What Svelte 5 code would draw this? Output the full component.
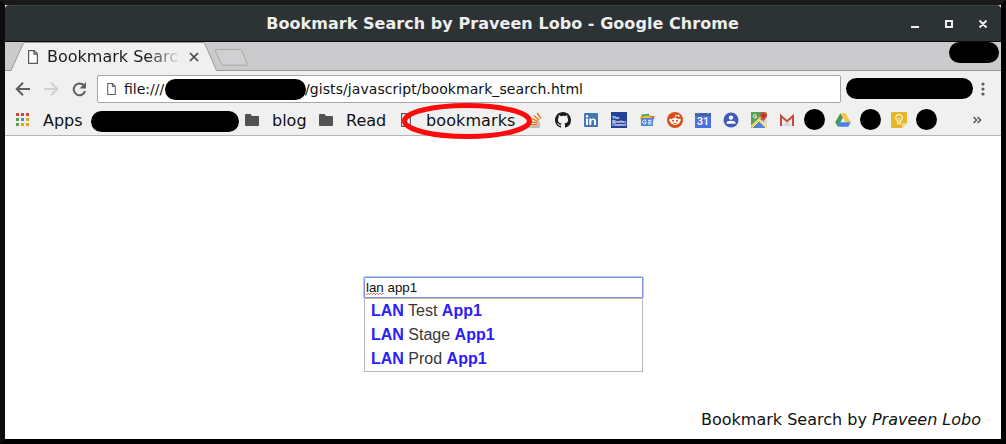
<script>
  const appColors = ['#d14836', '#d14836', '#d14836', '#5b9a56', '#4285f4', '#e0a51b', '#5b9a56', '#e0a51b', '#e0a51b'];
  const results = ['Test', 'Stage', 'Prod'];
  const favicons = ['stack', 'github', 'linkedin', 'weather', 'news', 'reddit', 'calendar', 'contacts', 'maps', 'gmail', 'hidden', 'drive', 'hidden', 'keep', 'hidden'];
</script>

{#snippet page(w, h)}
  <svg width={w} height={h} viewBox="0 0 10 14" fill="#fff" stroke="#5a5a5a" stroke-width="1.2"><path d="M.6.6h5.6l3.2 3.4v9.4H.6zM6 .8v3.4h3.2" /></svg>
{/snippet}

{#snippet folder()}
  <svg width="14" height="12" viewBox="0 0 14 12"><path d="M1 0h4.500L7 2h6q1 0 1 1v8q0 1-1 1H1q-1 0-1-1V1q0-1 1-1z" fill="#505352" /></svg>
{/snippet}

<div class="frame">
  <header class="title">
    <h1>Bookmark Search by Praveen Lobo - Google Chrome</h1>
    <svg class="controls" width="78" height="10" viewBox="0 0 78 10" fill="none" stroke="#eee" stroke-width="2">
      <path d="M0 8h8M35 2h6v6h-6zM68.500 1.500l7 7M75.500 1.500l-7 7" />
    </svg>
  </header>

  <div class="tabs">
    <svg class="tabshape" width="996" height="29" viewBox="0 0 996 29">
      <path d="M6 28.500L18 2q.7-1.5 2-1.5h178q1.3 0 2 1.5l11.5 26.500V29H6z" fill="#f0f0f1" />
      <path d="M0 28.500h6L18 2q.7-1.500 2-1.500h178q1.300 0 2 1.500l11.500 26.500H996" fill="none" stroke="#999" />
      <path d="M211 7.500h24q1.300 0 2 1.200l5 12.500q.5 2-1.200 2h-22q-2 0-2.500-1.500l-5.800-12.500q-.5-1.500.5-1.700z" fill="#d0d0d2" stroke="#a7a7a8" />
    </svg>
    <div class="tab">
      {@render page(10, 14)}
      <span class="tabname">Bookmark Searc</span>
      <svg width="10" height="10" viewBox="0 0 10 10" stroke="#464646" stroke-width="1.7"><path d="M1 1l8 8M9 1L1 9" /></svg>
    </div>
    <div class="redact user"></div>
  </div>

  <div class="toolbar">
    <svg class="nav" width="74" height="16" viewBox="0 0 74 16" fill="none" stroke="#5f5f63" stroke-width="2">
      <path d="M15 8H2M8 1.700L1.700 8 8 14.300" />
      <path d="M29 8h13M36 1.700L42.300 8 36 14.300" stroke="#d0d0d1" />
      <path d="M69 4.700A5.800 5.800 0 1 0 70.100 10" />
      <path d="M71 1v6.500h-6.500z" fill="#5f5f63" stroke="none" />
    </svg>
    <div class="url">
      {@render page(9, 12)}
      <span class="scheme">file:///</span>
      <div class="redact path"></div>
      <span class="rest">/gists/javascript/bookmark_search.html</span>
    </div>
    <div class="redact ext"></div>
    <svg class="dots" width="4" height="14" viewBox="0 0 4 14" fill="#5a5a5d"><circle cx="2" cy="2" r="1.600" /><circle cx="2" cy="7" r="1.600" /><circle cx="2" cy="12" r="1.600" /></svg>
  </div>

  <nav class="bookmarks">
    <div class="apps">{#each appColors as color}<i style:background={color}></i>{/each}</div>
    <span class="label w-apps">Apps</span>
    <div class="redact first"></div>
    {@render folder()}
    <span class="label w-blog">blog</span>
    {@render folder()}
    <span class="label w-read">Read</span>
    {@render page(10, 14)}
    <span class="label w-marks">bookmarks</span>
    <div class="favicons">
      {#each favicons as icon}
        <div class="cell">
          {#if icon === 'hidden'}
            <div class="redact dot"></div>
          {:else}
            <svg width="16" height="16" viewBox="0 0 16 16">
              {#if icon === 'stack'}
                <path d="M2 10v5h10v-5" fill="none" stroke="#aaa" stroke-width="1.400" />
                <path d="M3.500 12.700h7M3.800 9.800l6.800 1.300M5 6.600l6.200 3M7 3.500l5.200 4.700M10.200 1l3.700 5.700" fill="none" stroke="#e07b22" stroke-width="1.400" />
              {:else if icon === 'github'}
                <path fill="#1b1b1b" d="M8 0C3.580 0 0 3.580 0 8c0 3.540 2.290 6.530 5.470 7.590.4.070.55-.17.55-.38 0-.19-.01-.82-.01-1.490-2.010.37-2.530-.49-2.690-.94-.09-.23-.48-.94-.82-1.130-.28-.15-.68-.52-.01-.53.63-.01 1.080.58 1.230.82.72 1.210 1.870.87 2.330.66.07-.52.28-.87.51-1.070-1.780-.2-3.640-.89-3.640-3.950 0-.87.31-1.590.82-2.150-.08-.2-.36-1.020.08-2.120 0 0 .67-.21 2.200.82A7.700 7.700 0 0 1 8 3.870c.68 0 1.360.09 2 .26 1.530-1.040 2.200-.82 2.200-.82.44 1.100.16 1.920.08 2.120.51.56.82 1.270.82 2.150 0 3.070-1.870 3.750-3.650 3.950.29.25.54.73.54 1.480 0 1.070-.01 1.930-.01 2.200 0 .21.15.46.55.38A8.010 8.010 0 0 0 16 8c0-4.420-3.580-8-8-8z" />
              {:else if icon === 'linkedin'}
                <path fill="#4376b5" d="M2 1h12q1 0 1 1v12q0 1-1 1H2q-1 0-1-1V2q0-1 1-1z" />
                <path fill="#fff" d="M3 6.500h2V13H3zM6.300 6.500h2v1c1.100-1.800 4.700-1.500 4.700 1.700V13h-2V9.500c0-2-2.700-2-2.700.1V13h-2z" /><circle cx="4" cy="4.300" r="1.200" fill="#fff" />
              {:else if icon === 'weather'}
                <path fill="#24409b" d="M0 0h16v16H0z" />
                <g fill="#fff" font-family="Liberation Sans" font-weight="700" font-size="4"><text x="1" y="7">The</text><text x="1" y="10.500" textLength="14" lengthAdjust="spacingAndGlyphs">Weather</text><text x="1" y="14" textLength="14" lengthAdjust="spacingAndGlyphs">Channel</text></g>
              {:else if icon === 'news'}
                <path fill="#45a366" d="M2.500 2.500l7.500-.8.800 5H2z" /><path fill="#e4584b" d="M10.500 3.700l5 .6-1.500 5h-4z" /><path fill="#f2bd2e" d="M.5 5l8-1.500 4.500 2v3H2z" />
                <path fill="#4c82e0" d="M2 6h12v7q0 1-1 1H3q-1 0-1-1z" />
                <path d="M7.200 8.700a2 2 0 1 0 0 2.600v-1H5.800M9 8.300h3.500M9 10.100h3.500M9 11.900h3.500" fill="none" stroke="#fff" stroke-width="1" />
              {:else if icon === 'reddit'}
                <circle cx="8" cy="8" r="8" fill="#d84e16" /><ellipse cx="8" cy="9.400" rx="4.900" ry="3.500" fill="#fff" /><circle cx="3.400" cy="8" r="1.300" fill="#fff" /><circle cx="12.600" cy="8" r="1.300" fill="#fff" />
                <path d="M8 6l.8-3 2.300.6" fill="none" stroke="#fff" stroke-width=".8" /><circle cx="11.600" cy="3.800" r="1.100" fill="#fff" /><circle cx="6" cy="8.700" r="1" fill="#d84e16" /><circle cx="10" cy="8.700" r="1" fill="#d84e16" /><path d="M5.900 11q2.100 1.200 4.200 0" stroke="#d84e16" fill="none" stroke-width=".8" />
              {:else if icon === 'calendar'}
                <path fill="#4e70df" d="M0 1h16v15H0z" /><path fill="#3f5fa9" d="M0 1h16v3H0z" /><path fill="#ddd" d="M2 0h2v1.500H2zM12 0h2v1.500h-2z" /><text x="8" y="13" text-anchor="middle" font-family="Roboto" font-size="10.500" font-weight="600" fill="#fff">31</text>
              {:else if icon === 'contacts'}
                <circle cx="8" cy="8" r="7.500" fill="#4159bc" /><circle cx="8" cy="5.600" r="2.200" fill="#fff" /><path fill="#fff" d="M3.500 11.800V11q0-2.200 4.500-2.200t4.500 2.200v.8z" />
              {:else if icon === 'maps'}
                <path fill="#55a15b" d="M0 0h16v16H0z" /><path fill="#d8d9d9" d="M16 4v12L10 9z" /><path fill="#547fe8" d="M2.500 16L9 9.500l6.500 6.500z" /><path d="M0 15L15.500 0M8 8l8 8" stroke="#f8d358" stroke-width="2" /><path d="M1 16l8-8 7 8" fill="none" stroke="#fff" stroke-width=".7" />
                <path fill="#cd493d" d="M12.500 0a3.500 3.500 0 0 1 3.500 3.500c0 2.500-3 3.500-3.500 7-.5-3.500-3.500-4.500-3.500-7A3.500 3.500 0 0 1 12.500 0z" /><circle cx="12.500" cy="3.600" r="1.200" fill="#7b2928" /><path d="M5.300 3.200a1.700 1.700 0 1 0 .4 1.300H4.200" fill="none" stroke="#fff" stroke-width=".9" />
              {:else if icon === 'gmail'}
                <path fill="#ececec" d="M1 3h14v11H1z" /><path fill="#d9d9d9" d="M3 14l5-5 5 5z" /><path d="M2 14V4l6 5.200L14 4v10" fill="none" stroke="#c84a3c" stroke-width="2" />
              {:else if icon === 'drive'}
                <path fill="#45975c" d="M5.400 1.200L8 5.700 2.800 14.800.2 10.200z" /><path fill="#f2c940" d="M5.400 1.200h5.200l5.200 9h-5.200z" /><path fill="#4d7fe5" d="M5.300 10.200h10.500l-2.600 4.600H2.800z" />
              {:else}
                <path fill="#e4b72c" d="M1 0h14q1 0 1 1v10l-5 5H1q-1 0-1-1V1q0-1 1-1z" /><path fill="#f5d980" d="M11 16v-5h5z" /><path d="M6.300 10V8.500a3.200 3.200 0 1 1 3.400 0V10zM6.200 11.700h3.600" fill="none" stroke="#fff4cf" stroke-width="1.200" /><path d="M7 6l1 1 1-1M8 7v3" stroke="#fff4cf" fill="none" stroke-width=".7" />
              {/if}
            </svg>
          {/if}
        </div>
      {/each}
    </div>
    <svg class="more" width="9" height="8" viewBox="0 0 9 8" fill="none" stroke="#555" stroke-width="1.500"><path d="M.6 1l3 3-3 3M4.600 1l3 3-3 3" /></svg>
    <svg class="ring" width="134" height="38" viewBox="0 0 134 38"><ellipse cx="67" cy="19" rx="62.500" ry="15.500" fill="none" stroke="#fb0b0b" stroke-width="5" /></svg>
  </nav>

  <main>
    <div class="search">
      <div class="input"><span class="typo">lan</span> app1</div>
      <ul>
        {#each results as name}<li><b>LAN</b> {name} <b>App1</b></li>{/each}
      </ul>
    </div>
    <footer>Bookmark Search by <em>Praveen Lobo</em></footer>
  </main>
</div>

<style>
  :global(body) { margin: 0; }
  * { box-sizing: border-box; }
  svg { display: block; flex: none; }
  .frame { width: 1006px; height: 444px; border: 5px solid; border-color: #1a1a1a #000 #000 #0d0d0d; background: #fff; display: flex; flex-direction: column; overflow: hidden; font-family: "DejaVu Sans", sans-serif; font-size: 16px; color: #111; }
  .redact { background: #000; flex: none; border-radius: 11px; }
  .title { height: 37px; flex: none; background: #2d3234; border-top: 1px solid #3d4244; border-bottom: 1px solid #090a0a; border-radius: 4px 4px 0 0; display: grid; grid-template-columns: 906px 78px; align-items: center; }
  h1 { margin: 0; padding-left: 89px; text-align: center; font-size: 16px; letter-spacing: .05px; line-height: 35px; color: #eee; white-space: nowrap; }
  .controls { margin-top: 1px; }
  .tabs { height: 29px; flex: none; background: #cbcbcd; display: grid; grid-template-columns: 944px 50px; }
  .tabs > * { grid-row: 1; }
  .tabshape { grid-column: 1; }
  .tab { grid-column: 1; display: flex; align-items: center; padding-left: 23px; height: 29px; z-index: 1; }
  .tabname { width: 133px; margin: 0 9px 0 9px; white-space: nowrap; overflow: hidden; color: transparent; background: linear-gradient(90deg, #1b1b1b 100px, #f0f0f1 136px); background-clip: text; }
  .user { grid-column: 2; height: 21px; z-index: 1; }
  .toolbar { height: 33px; flex: none; display: flex; align-items: center; background: #f0f0f1; padding: 3px 14px 0 10px; }
  .nav { margin-right: 8px; }
  .url { width: 744px; height: 28px; flex: none; border: 1px solid #a6a6a6; border-radius: 2px; background: #fff; display: flex; align-items: center; padding-left: 9px; font-size: 14px; white-space: nowrap; }
  .scheme { width: 42px; margin-left: 8px; }
  .path { width: 141px; height: 21px; margin-left: -1px; }
  .rest { margin-left: -1px; letter-spacing: .07px; }
  .ext { width: 127px; height: 21px; margin: -2px 8px 0 5px; }
  .bookmarks { height: 32px; flex: none; display: flex; align-items: center; position: relative; background: #f0f0f1; border-bottom: 1px solid #b5b5b5; padding-left: 11px; }
  .apps { display: grid; grid-template-columns: repeat(3, 3px); gap: 2px; width: 13px; margin-right: 14px; }
  .apps i { height: 3px; }
  .label { flex: none; white-space: nowrap; padding-top: 2px; }
  .w-apps { width: 48px; }
  .first { width: 148px; height: 21px; margin: 3px 6px 0 0; }
  .w-blog { width: 47px; margin-left: 13px; }
  .w-read { width: 55px; margin-left: 13px; }
  .w-marks { width: 95px; margin-left: 15px; letter-spacing: .1px; }
  .favicons { display: grid; grid-template-columns: repeat(15, 28px); align-items: center; }
  .cell { display: flex; justify-content: center; }
  .dot { width: 21px; height: 21px; margin: -1px 1px 0 0; }
  .more { margin-left: 32px; }
  .ring { position: absolute; left: 395px; top: -2px; }
  main { flex: 1; display: flex; flex-direction: column; align-items: center; padding-top: 141px; }
  .search { width: 279px; margin-left: 1px; font-family: "Liberation Sans", sans-serif; }
  .input { height: 21px; border: 1px solid #7c93d6; box-shadow: 0 0 0 1px #b9ccf8; border-radius: 1px; padding-left: 1px; font-size: 13.333px; line-height: 19px; }
  .typo { background: repeating-linear-gradient(90deg, #e8604f 0 1px, transparent 1px 3px) 0 100% / 18px 1px no-repeat, repeating-linear-gradient(90deg, transparent 0 1px, #ee8a7d 1px 3px) 0 calc(100% - 1px) / 18px 1px no-repeat; }
  ul { list-style: none; margin: 0; padding: 0 6px; height: 74px; border: 1px solid #b9b9b9; color: #383838; }
  li { height: 24px; line-height: 24px; font-size: 16px; }
  b { color: #2b20f5; }
  footer { align-self: flex-end; margin: auto 20px 9px 0; line-height: 20px; }
</style>
